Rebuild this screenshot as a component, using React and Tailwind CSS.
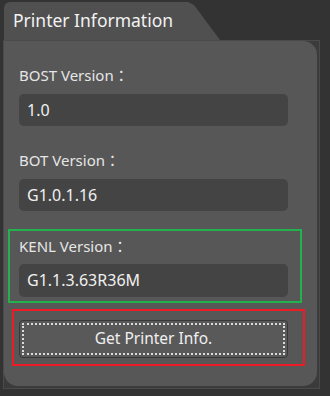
const fontStack = { fontFamily: '"Noto Sans", "Noto Sans CJK TC", sans-serif' };

const Field = ({ label, value, first }) => (
  <>
    <div className={`${first ? '' : 'mt-[24px]'} h-[20px] text-[15px] leading-[20px] text-[#e6e6e6]`}>
      {label}
    </div>
    <div className="mt-[9px] h-[32px] w-[269px] rounded-[5px] bg-[#444444] pl-[8px] text-[16px] leading-[32px] text-[#f0f0f0]">
      {value}
    </div>
  </>
);

export default function App() {
  return (
    <div className="h-[396px] w-[330px] overflow-hidden bg-[#333333]" style={fontStack}>
      {/* Tab */}
      <div className="ml-[4px] mt-[2px] h-[38px] w-[216px] rounded-tl-[6px] rounded-tr-[10px] bg-[#505050] [clip-path:polygon(0_0,184px_0,190px_3px,216px_100%,0_100%)]">
        <div className="pl-[9px] pt-[5px] text-[17.5px] leading-[26px] text-[#f2f2f2]">Printer Information</div>
      </div>

      {/* Frame */}
      <div className="ml-[3px] h-[349px] w-[317px] border border-[#4a4a4a] bg-[#3b3b3b]">
        <div className="mr-[2px] h-[345px] rounded-tr-[14px] rounded-b-[14px] bg-[#575757] pl-[15px] pt-[24px]">
          <Field label="BOST Version：" value="1.0" first />
          <Field label="BOT Version：" value="G1.0.1.16" />

          <div className="-ml-[11px] mt-[18px] w-[294px] border-2 border-[#22b14c] pb-[4px] pl-[9px] pt-[5px]">
            <div className="h-[20px] text-[15px] leading-[20px] text-[#e6e6e6]">KENL Version：</div>
            <div className="mt-[8px] h-[33px] w-[269px] rounded-[5px] bg-[#444444] pl-[8px] text-[16px] leading-[33px] text-[#f0f0f0]">
              G1.1.3.63R36M
            </div>
          </div>

          <div className="-ml-[7px] mt-[6px] w-[293px] border-2 border-[#ed1c24] pb-[6px] pl-[5px] pt-[9px]">
            <button className="flex h-[38px] w-[269px] items-center justify-center rounded-[4px] border border-[#383838] bg-[#595959] p-[2px]">
              <span className="flex h-full w-full items-center justify-center border-2 border-dotted border-[#dcdcdc] text-[15.5px] text-[#f0f0f0]">
                Get Printer Info.
              </span>
            </button>
          </div>
        </div>
      </div>
    </div>
  );
}
